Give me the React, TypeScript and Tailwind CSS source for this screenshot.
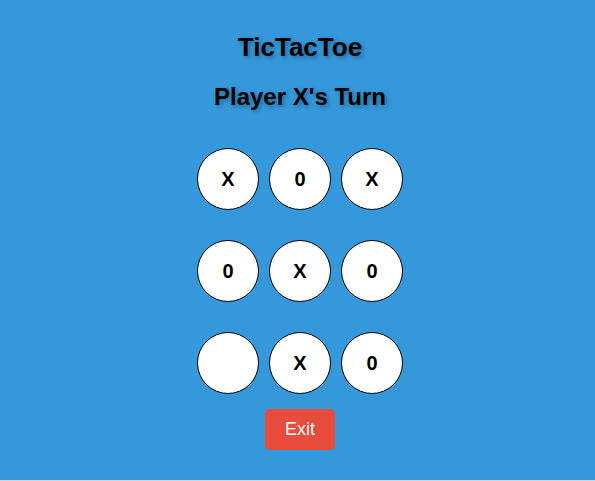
const board: string[][] = [
  ["X", "0", "X"],
  ["0", "X", "0"],
  ["", "X", "0"],
];

function Cell({ value, label }: { value: string; label: string }) {
  return (
    <button
      type="button"
      aria-label={label}
      className="flex size-[62px] items-center justify-center rounded-full border border-black bg-white text-xl font-bold text-black"
    >
      {value}
    </button>
  );
}

export default function App() {
  return (
    <div className="min-h-screen border-b border-[#d4d4d4] bg-[#3498db] font-['Liberation_Sans',Arial,sans-serif] text-black">
      <main className="flex flex-col items-center pt-8 pl-[5px]">
        <h1 className="text-[26px] leading-[30px] font-bold [text-shadow:2px_2px_4px_rgba(0,0,0,0.3)]">TicTacToe</h1>
        <h2 className="mt-5 text-2xl leading-[30px] font-bold [text-shadow:2px_2px_4px_rgba(0,0,0,0.3)]">Player X's Turn</h2>
        <div className="mt-9 flex flex-col gap-[30px]">
          {board.map((row, r) => (
            <div key={r} className="flex gap-[10px]">
              {row.map((value, c) => (
                <Cell key={c} value={value} label={value || `Empty cell, row ${r + 1}, column ${c + 1}`} />
              ))}
            </div>
          ))}
        </div>
        <button type="button" className="mt-[15px] rounded-[5px] bg-[#e74c3c] px-5 py-[10px] text-lg leading-[21px] text-white">
          Exit
        </button>
      </main>
    </div>
  );
}
